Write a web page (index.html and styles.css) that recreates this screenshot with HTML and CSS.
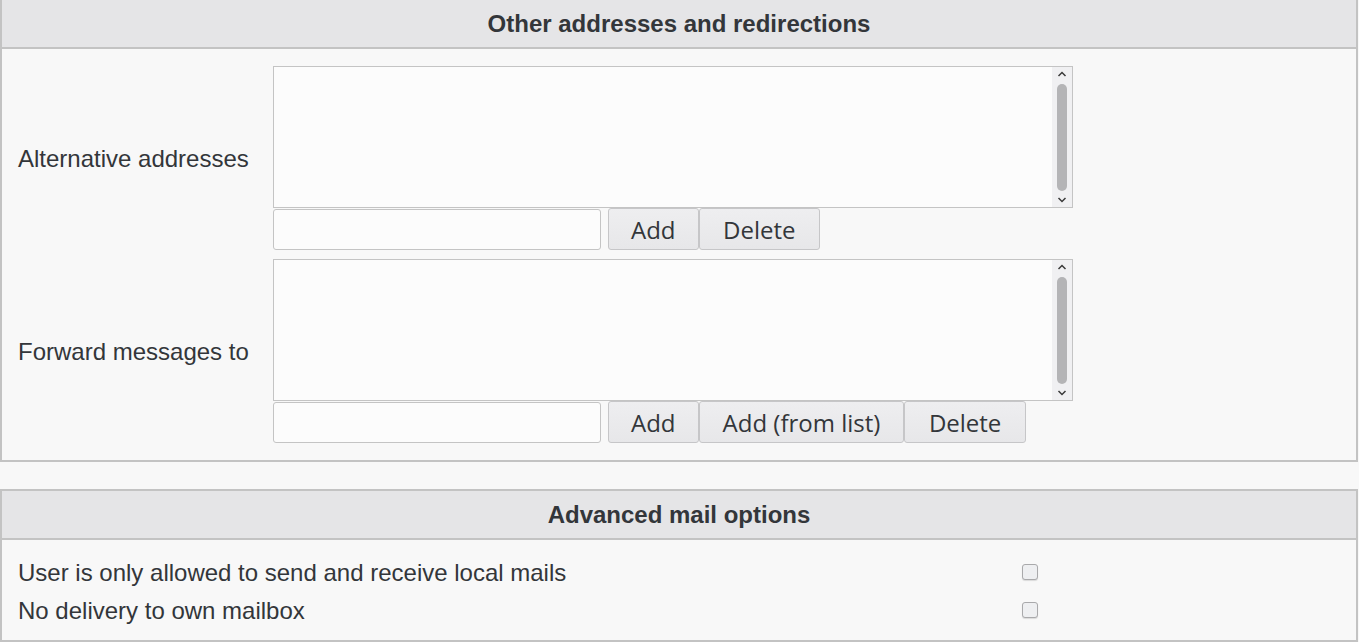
FILE: index.html
```html
<!DOCTYPE html>
<html lang="en">
<head>
<meta charset="utf-8">
<title>Mail settings</title>
<link rel="stylesheet" href="styles.css">
</head>
<body>
<div class="page">
  <section class="panel panel-first">
    <h2 class="panel-head">Other addresses and redirections</h2>
    <div class="panel-body">
      <div class="field-row">
        <div class="field-label">Alternative addresses</div>
        <div class="field-control">
          <div class="listbox">
            <div class="listbox-items"></div>
            <div class="scrollbar">
              <svg class="chev" width="10" height="6" viewBox="0 0 10 6"><polyline points="1.5,5 5,1.5 8.5,5" fill="none" stroke="#3a3a3a" stroke-width="1.5"/></svg>
              <div class="thumb"></div>
              <svg class="chev" width="10" height="6" viewBox="0 0 10 6"><polyline points="1.5,1 5,4.5 8.5,1" fill="none" stroke="#3a3a3a" stroke-width="1.5"/></svg>
            </div>
          </div>
          <div class="entry-row">
            <input class="entry" type="text">
            <div class="btn-group">
              <button class="btn">Add</button><button class="btn btn-wide">Delete</button>
            </div>
          </div>
        </div>
      </div>
      <div class="field-row">
        <div class="field-label">Forward messages to</div>
        <div class="field-control">
          <div class="listbox">
            <div class="listbox-items"></div>
            <div class="scrollbar">
              <svg class="chev" width="10" height="6" viewBox="0 0 10 6"><polyline points="1.5,5 5,1.5 8.5,5" fill="none" stroke="#3a3a3a" stroke-width="1.5"/></svg>
              <div class="thumb"></div>
              <svg class="chev" width="10" height="6" viewBox="0 0 10 6"><polyline points="1.5,1 5,4.5 8.5,1" fill="none" stroke="#3a3a3a" stroke-width="1.5"/></svg>
            </div>
          </div>
          <div class="entry-row">
            <input class="entry" type="text">
            <div class="btn-group">
              <button class="btn">Add</button><button class="btn btn-mid">Add (from list)</button><button class="btn btn-wide">Delete</button>
            </div>
          </div>
        </div>
      </div>
    </div>
  </section>

  <section class="panel">
    <h2 class="panel-head">Advanced mail options</h2>
    <div class="panel-body options">
      <div class="opt-label">User is only allowed to send and receive local mails</div>
      <div class="opt-check"><input class="check" type="checkbox"></div>
      <div class="opt-label">No delivery to own mailbox</div>
      <div class="opt-check"><input class="check" type="checkbox"></div>
    </div>
  </section>
</div>
</body>
</html>
```

FILE: styles.css
```css
html, body {
  margin: 0;
  padding: 0;
  background: #f8f8f8;
}

body {
  font-family: "Liberation Sans", Arial, sans-serif;
  font-size: 24px;
  color: #33363a;
}

.page {
  padding-right: 1px;
}

.panel {
  border: 2px solid #c3c3c3;
  background: #f8f8f8;
  margin-bottom: 27px;
}

.panel-first {
  border-top: none;
}

.panel-head {
  margin: 0;
  height: 47px;
  line-height: 48px;
  text-align: center;
  font-size: 24px;
  font-weight: bold;
  background: #e5e5e7;
  border-bottom: 2px solid #c3c3c3;
  color: #33363a;
}

.panel-body {
  padding: 17px 16px 17px 16px;
}

.field-row {
  display: flex;
  align-items: center;
}

.field-row + .field-row {
  margin-top: 9px;
}

.field-label {
  width: 255px;
  flex: none;
  padding-top: 2px;
}

.field-control {
  display: flex;
  flex-direction: column;
}

.listbox {
  width: 800px;
  height: 142px;
  box-sizing: border-box;
  border: 1px solid #c4c4c4;
  background: #fcfcfc;
  display: flex;
}

.listbox-items {
  flex: 1;
}

.scrollbar {
  width: 20px;
  background: #f0f0f2;
  display: flex;
  flex-direction: column;
  align-items: center;
  padding: 4px 0 4px;
  box-sizing: border-box;
}

.chev {
  display: block;
  flex: none;
}

.thumb {
  width: 10px;
  flex: 1;
  margin: 7px 0 6px;
  border-radius: 5px;
  background: #b4b4b6;
}

.entry-row {
  display: flex;
  align-items: flex-end;
}

.entry {
  width: 328px;
  height: 41px;
  box-sizing: border-box;
  border: 1px solid #c4c4c4;
  border-radius: 3px;
  background: #fcfcfc;
  margin: 1px 7px 0 0;
  padding: 0 6px;
  font-family: "Open Sans", sans-serif;
  font-size: 20px;
}

.btn-group {
  display: flex;
}

.btn {
  height: 42px;
  box-sizing: border-box;
  padding: 1px 22px 0;
  border: 1px solid #c6c6c8;
  border-radius: 3px;
  background: linear-gradient(#eeeef0, #e7e7e9);
  font-family: "Open Sans", sans-serif;
  font-size: 24px;
  color: #33363a;
  line-height: 39px;
}

.btn-mid {
  padding: 1px 23px 0;
}

.btn-wide {
  padding: 1px 23.5px 0;
}

.options {
  display: grid;
  grid-template-columns: 1004px auto;
  grid-auto-rows: 38px;
  align-items: center;
  padding: 14px 16px 10px 16px;
}

.opt-check {
  display: flex;
  align-items: center;
}

.check {
  appearance: none;
  -webkit-appearance: none;
  width: 16px;
  height: 16px;
  margin: 0 0 2px 0;
  box-sizing: border-box;
  border: 1px solid #a9a9ab;
  border-radius: 3px;
  background: #eeeff1;
  box-shadow: 0 1px 1px rgba(0,0,0,0.12);
}
```
